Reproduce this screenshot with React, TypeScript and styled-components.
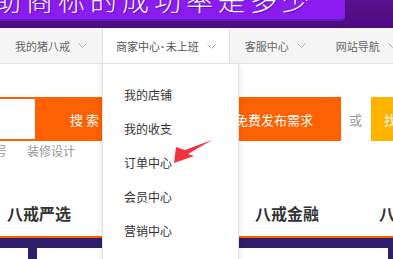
import React from "react";
import styled, { createGlobalStyle } from "styled-components";

const GlobalStyle = createGlobalStyle`
    body {
        margin: 0;
        font-family: "Noto Sans CJK SC", "Noto Sans", sans-serif;
        background: #ffffff;
    }
`

const menuItems = ["我的店铺", "我的收支", "订单中心", "会员中心", "营销中心", "服务市场"]
const categories = ["八戒严选", "八戒知产", "八戒金融", "八戒云上"]

const Chevron = () => (
    <svg width="9" height="5" viewBox="0 0 9 5">
        <polyline points="0.5,0.5 4.5,4.5 8.5,0.5" fill="none" stroke="#b0b0b0" strokeWidth="1" />
    </svg>
)

const Arrow = () => (
    <ArrowMark width="45" height="32" viewBox="0 0 45 32">
        <polygon points="42,5 15,15 6,12 4,28 24,21 18,19" fill="#f2323f" />
    </ArrowMark>
)

export default function App() {
    const navItems = [
        { label: "我的猪八戒" },
        { label: <>商家中心<Dot>·</Dot>未上班</>, active: true },
        { label: "客服中心" },
        { label: "网站导航" },
    ]

    return (
        <Page>
            <GlobalStyle />
            <Banner>
                <PromoButton>
                    <PromoText>助商标的成功率是多少</PromoText>
                </PromoButton>
            </Banner>
            <TopNav>
                {navItems.map((item, i) => (
                    <NavItem key={i} $active={item.active}>
                        <span>{item.label}</span>
                        <Chevron />
                        {item.active && (
                            <Dropdown>
                                {menuItems.map((m) => (
                                    <MenuItem key={m}>{m}</MenuItem>
                                ))}
                            </Dropdown>
                        )}
                    </NavItem>
                ))}
            </TopNav>
            <SearchRow>
                <SearchBox>
                    <SearchInput />
                    <SearchButton>搜 索</SearchButton>
                </SearchBox>
                <PublishButton>免费发布需求</PublishButton>
                <OrText>或</OrText>
                <FindButton>找服务商</FindButton>
            </SearchRow>
            <HotLinks>
                <HotLink $first>账号</HotLink>
                <HotLink>装修设计</HotLink>
            </HotLinks>
            <CategoryRow>
                {categories.map((c) => (
                    <Category key={c}>{c}</Category>
                ))}
            </CategoryRow>
            <CategoryBar />
            <ContentRow>
                <span />
                <PurpleStrip />
                <span />
                <PurpleStrip />
            </ContentRow>
            <Arrow />
        </Page>
    )
}

const Page = styled.div`
    position: relative;
    width: 393px;
    height: 259px;
    overflow: hidden;
`

const Banner = styled.div`
    height: 28px;
    background: linear-gradient(180deg, #5a0f8e 0%, #4e0b7e 100%);
`

const PromoButton = styled.div`
    width: 345px;
    height: 19px;
    background: #8a1cf0;
    border-bottom: 2px solid #5121c6;
    border-bottom-right-radius: 4px;
    overflow: hidden;
`

const PromoText = styled.div`
    margin: -14px 0 0 -6px;
    font-size: 27px;
    line-height: 27px;
    letter-spacing: 5px;
    font-weight: 300;
    color: #ffffff;
    white-space: nowrap;
    text-shadow: 1px 1px 0 rgba(70, 0, 150, 0.55);
`

const TopNav = styled.div`
    display: flex;
    height: 35px;
    background: #f5f5f5;
    border-bottom: 1px solid #e5e5e5;
`

const NavItem = styled.div<{ $active?: boolean }>`
    position: relative;
    flex: none;
    display: flex;
    align-items: center;
    gap: 8px;
    height: ${(p) => (p.$active ? "36px" : "35px")};
    padding: 0 ${(p) => (p.$active ? "13px" : "14px")};
    box-sizing: border-box;
    font-size: 11px;
    color: ${(p) => (p.$active ? "#555" : "#666")};
    white-space: nowrap;
    background: ${(p) => (p.$active ? "#ffffff" : "transparent")};
    border-left: 1px solid ${(p) => (p.$active ? "#e2e2e2" : "transparent")};
    border-right: 1px solid ${(p) => (p.$active ? "#e2e2e2" : "transparent")};
    z-index: ${(p) => (p.$active ? 3 : 1)};
`

const Dot = styled.span`
    font-family: "Liberation Sans", sans-serif;
    font-weight: 700;
    margin: 0 1px;
`

const Dropdown = styled.div`
    position: absolute;
    top: 35px;
    left: -1px;
    width: 137px;
    height: 230px;
    box-sizing: border-box;
    padding-top: 14px;
    background: #ffffff;
    border: 1px solid #e4e4e4;
    box-shadow: 0 2px 6px rgba(0, 0, 0, 0.12);
    z-index: -1;
`

const MenuItem = styled.div`
    padding-left: 21px;
    line-height: 34px;
    font-size: 12px;
    color: #333;
`

const SearchRow = styled.div`
    display: flex;
    align-items: center;
    height: 44px;
    margin-top: 33px;
    & > * {
        flex: none;
    }
`

const SearchBox = styled.div`
    display: flex;
    height: 44px;
    box-sizing: border-box;
    border-top: 2px solid #ff6000;
    border-bottom: 2px solid #ff6000;
`

const SearchInput = styled.div`
    width: 35px;
    background: #ffffff;
`

const SearchButton = styled.div`
    width: 99px;
    display: flex;
    align-items: center;
    justify-content: center;
    background: #ff6000;
    color: #ffffff;
    font-size: 13px;
`

const PublishButton = styled.div`
    width: 134px;
    height: 44px;
    margin-left: 73px;
    display: flex;
    align-items: center;
    justify-content: center;
    background: #ff6000;
    color: #ffffff;
    font-size: 13px;
`

const OrText = styled.span`
    margin: 0 9px 0 8px;
    font-size: 13px;
    color: #999;
`

const FindButton = styled.div`
    width: 100px;
    height: 44px;
    padding-left: 13px;
    box-sizing: border-box;
    display: flex;
    align-items: center;
    background: #ffb400;
    color: #ffffff;
    font-size: 13px;
`

const HotLinks = styled.div`
    display: flex;
    gap: 20px;
    line-height: 20px;
`

const HotLink = styled.span<{ $first?: boolean }>`
    margin-left: ${(p) => (p.$first ? "-17px" : "0")};
    font-size: 12px;
    color: #999;
`

const CategoryRow = styled.div`
    display: flex;
    align-items: flex-end;
    gap: 60px;
    height: 75px;
    box-sizing: border-box;
    padding: 0 0 11px 7px;
`

const Category = styled.span`
    flex: none;
    font-size: 16px;
    line-height: 24px;
    font-weight: 700;
    color: #333;
`

const CategoryBar = styled.div`
    height: 10px;
    background: #2f1f6b;
    border-top: 2px solid #ff6000;
`

const ContentRow = styled.div`
    display: grid;
    grid-template-columns: 28px 9px 351px 5px;
    height: 11px;
`

const PurpleStrip = styled.span`
    background: #2f1f6b;
`

const ArrowMark = styled.svg`
    position: absolute;
    left: 170px;
    top: 135px;
    z-index: 5;
`
